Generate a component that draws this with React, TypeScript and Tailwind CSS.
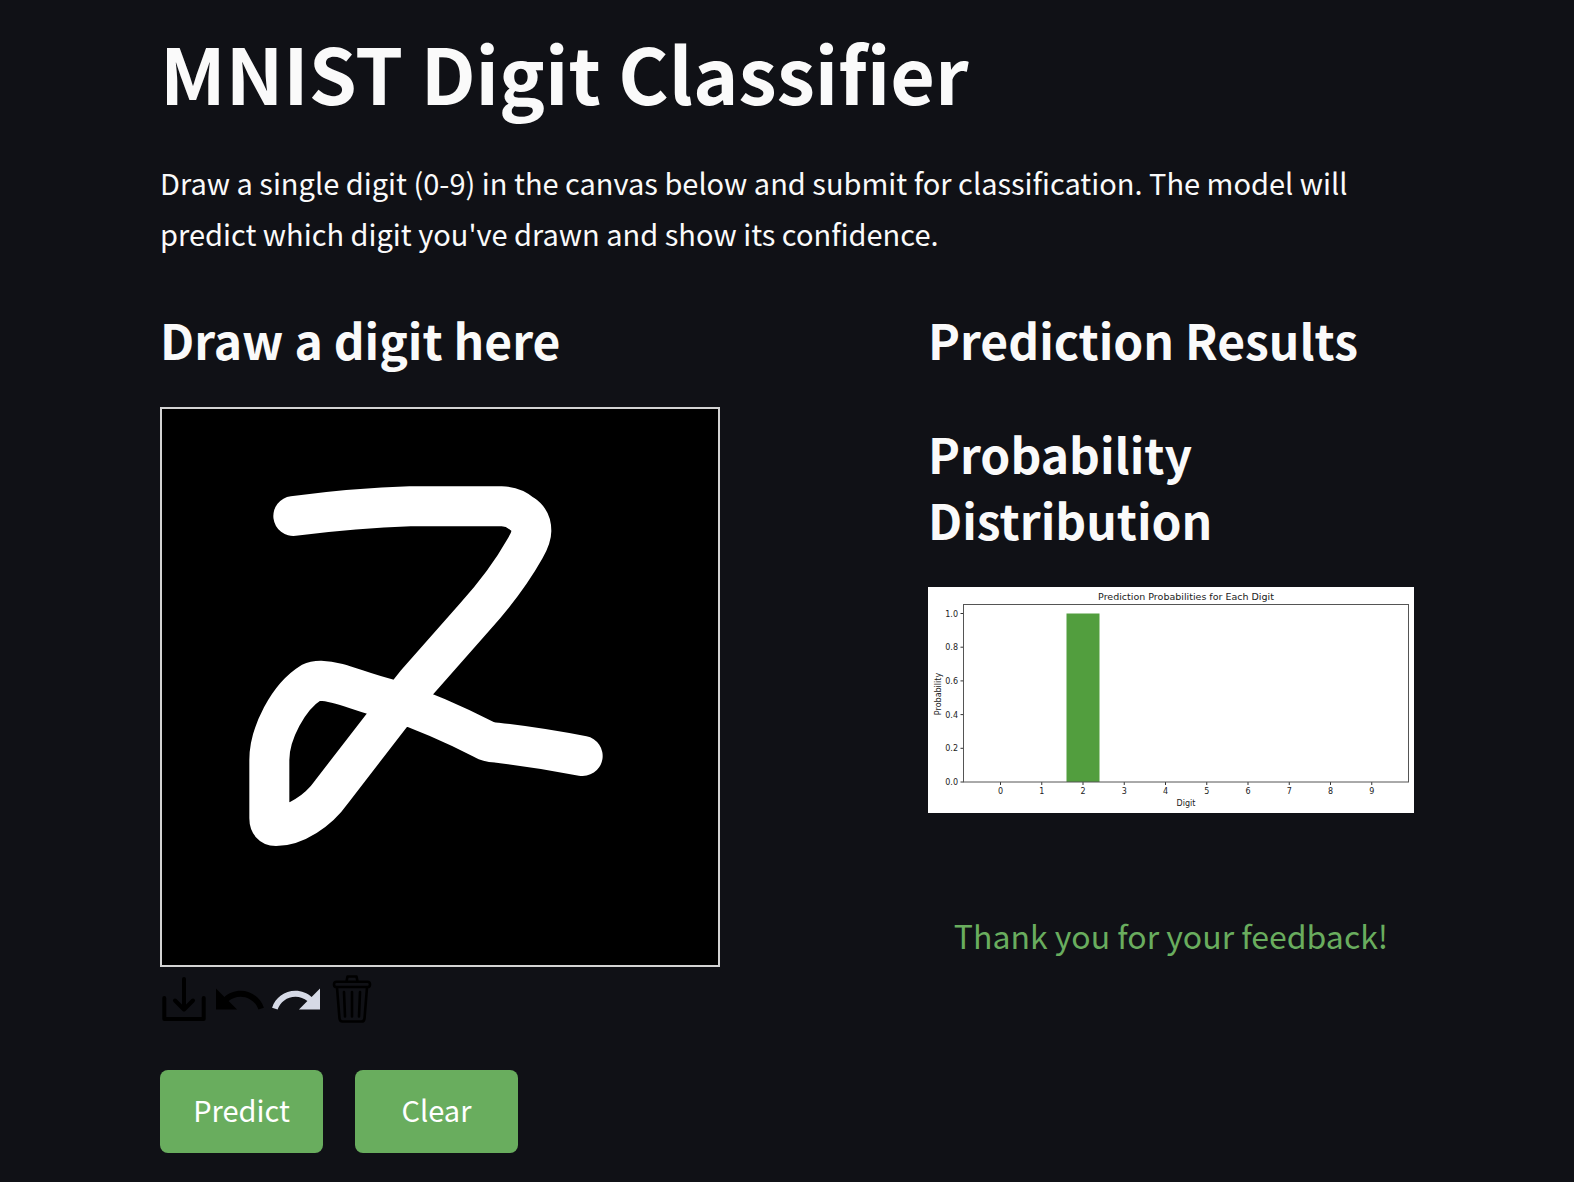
import type { ReactNode } from "react";

const probabilities = [0, 0, 1, 0, 0, 0, 0, 0, 0, 0];
const yTicks = [0, 0.2, 0.4, 0.6, 0.8, 1];

// Plot area in chart units
const plot = { left: 71, right: 961, top: 35, bottom: 390 };
const digitX = (d: number) => 145 + d * 82.5;
const probY = (p: number) => plot.bottom - p * 337;

function Heading({ children }: { children: ReactNode }) {
  return <h2 className="text-[48px] leading-[66px] font-bold">{children}</h2>;
}

function ToolButton({ label, viewBox, children }: { label: string; viewBox: string; children: ReactNode }) {
  return (
    <button type="button" aria-label={label} title={label} className="cursor-pointer text-black">
      <svg viewBox={viewBox} className="block size-12" aria-hidden="true">
        {children}
      </svg>
    </button>
  );
}

function ActionButton({ children }: { children: ReactNode }) {
  return (
    <button
      type="button"
      className="w-[163px] cursor-pointer rounded-lg bg-[#69ad5e] pt-[14px] pb-[18px] text-[29px] leading-[51px] text-white"
    >
      {children}
    </button>
  );
}

function Drawing() {
  return (
    <div className="size-[560px] max-w-full border-2 border-[#d3d3d3] bg-black">
      <svg viewBox="0 0 556 556" className="block size-full" role="img" aria-label="Drawing canvas">
        <path
          transform="translate(68 61) scale(0.33333)"
          d="M190 138 Q380 114 540 109 L815 109 Q850 109 878 133 Q904 150 904 183 C904 200 893 222 885 236 C850 298 800 368 735 440 L560 638 L475 745 L305 965 C265 1022 195 1068 138 1068 Q118 1068 118 1045 L118 870 C118 790 175 680 243 638 Q255 632 272 632 C330 634 385 665 480 688 C580 722 680 766 765 810 Q775 816 800 818 Q925 832 1058 858"
          fill="none"
          stroke="white"
          strokeWidth="120"
          strokeLinecap="round"
          strokeLinejoin="round"
        />
      </svg>
    </div>
  );
}

function ProbabilityChart() {
  return (
    <svg
      viewBox="0 0 972 452"
      className="block w-full bg-white font-['DejaVu_Sans',sans-serif] text-[16px]"
      role="img"
      aria-label="Prediction probabilities for each digit"
    >
      <text x="516" y="25" textAnchor="middle" className="fill-[#222] text-[19px]">
        Prediction Probabilities for Each Digit
      </text>
      {probabilities.map((p, d) => (
        <g key={d}>
          <rect x={digitX(d) - 33} y={probY(p)} width="66" height={plot.bottom - probY(p)} fill="#529e3e" />
          <line x1={digitX(d)} x2={digitX(d)} y1={plot.bottom} y2={plot.bottom + 6} stroke="#333" strokeWidth="2" />
          <text x={digitX(d)} y="414" textAnchor="middle" className="fill-[#222]">
            {d}
          </text>
        </g>
      ))}
      {yTicks.map((t) => (
        <g key={t}>
          <line x1={plot.left - 6} x2={plot.left} y1={probY(t)} y2={probY(t)} stroke="#333" strokeWidth="2" />
          <text x="60" y={probY(t) + 6} textAnchor="end" className="fill-[#222]">
            {t.toFixed(1)}
          </text>
        </g>
      ))}
      <rect
        x={plot.left}
        y={plot.top}
        width={plot.right - plot.left}
        height={plot.bottom - plot.top}
        fill="none"
        stroke="#555"
        strokeWidth="2"
      />
      <text x="516" y="437" textAnchor="middle" className="fill-[#222]">
        Digit
      </text>
      <text transform="translate(25 214) rotate(-90)" textAnchor="middle" className="fill-[#222]">
        Probability
      </text>
    </svg>
  );
}

export default function App() {
  return (
    <main className="min-h-screen bg-[#101116] px-40 pt-[18px] pb-7 font-['Noto_Sans_CJK_SC',sans-serif] text-[#fafafa]">
      <h1 className="text-[77px] leading-[107px] font-bold">MNIST Digit Classifier</h1>
      <p className="mt-8 text-[29px] leading-[51px]">
        Draw a single digit (0-9) in the canvas below and submit for classification. The model will predict which digit
        you've drawn and show its confidence.
      </p>

      <div className="mt-[47px] grid grid-cols-[736fr_486fr] gap-8">
        <section>
          <Heading>Draw a digit here</Heading>
          <div className="mt-[35px]">
            <Drawing />
          </div>
          <div className="mt-2 flex gap-2">
            <ToolButton label="Download" viewBox="0 0 48 48">
              <g fill="none" stroke="currentColor" strokeWidth="4" strokeLinecap="round" strokeLinejoin="round">
                <path d="M4.3 23V44H43.7V23" />
                <path d="M24 4V34M15 25.5L24 34.5L33 25.5" />
              </g>
            </ToolButton>
            <ToolButton label="Undo" viewBox="2 1.25 20.5 20.5">
              <path
                fill="currentColor"
                d="M12.5 8c-2.65 0-5.05.99-6.9 2.6L2 7v9h9l-3.62-3.62c1.39-1.16 3.16-1.88 5.12-1.88 3.54 0 6.55 2.31 7.6 5.5l2.37-.78C21.08 11.03 17.15 8 12.5 8z"
              />
            </ToolButton>
            <ToolButton label="Redo" viewBox="1.5 1.25 20.5 20.5">
              <path
                fill="#d6dae6"
                d="M18.4 10.6C16.55 8.99 14.15 8 11.5 8c-4.65 0-8.58 3.03-9.96 7.22L3.9 16c1.05-3.19 4.05-5.5 7.6-5.5 1.95 0 3.73.72 5.12 1.88L13 16h9V7l-3.6 3.6z"
              />
            </ToolButton>
            <ToolButton label="Reset canvas" viewBox="0 0 48 48">
              <g fill="none" stroke="currentColor" strokeWidth="2.6" strokeLinecap="round" strokeLinejoin="round">
                <path d="M18.5 6.5L19.5 1.5H28.5L29.5 6.5" />
                <rect x="6" y="6.8" width="36" height="5.2" rx="2.6" />
                <path d="M9 12.5L11.5 43.5Q11.8 46.5 14.5 46.5H33.5Q36.2 46.5 36.5 43.5L39 12.5" />
                <path d="M16 17L17 41.5M24 17V41.5M32 17L31 41.5" />
              </g>
            </ToolButton>
          </div>
          <div className="mt-[47px] flex gap-8">
            <ActionButton>Predict</ActionButton>
            <ActionButton>Clear</ActionButton>
          </div>
        </section>

        <section>
          <Heading>Prediction Results</Heading>
          <div className="mt-12">
            <Heading>Probability Distribution</Heading>
          </div>
          <div className="mt-[35px]">
            <ProbabilityChart />
          </div>
          <p role="status" className="mt-[97px] text-center text-[32px] leading-[51px] text-[#69ad5e]">
            Thank you for your feedback!
          </p>
        </section>
      </div>
    </main>
  );
}
